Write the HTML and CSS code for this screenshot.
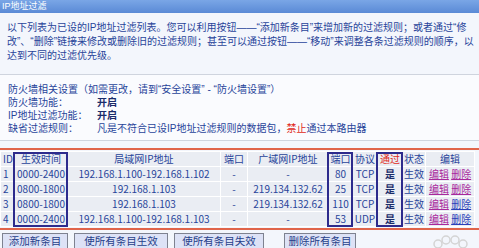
FILE: index.html
```html
<!DOCTYPE html>
<html lang="zh-CN">

<head>
    <meta charset="UTF-8">
    <title>IP地址过滤</title>
    <link rel="stylesheet" href="styles.css">
</head>

<body>
    <div class="titulo">IP地址过滤</div>

    <p class="intro">以下列表为已设的IP地址过滤列表。您可以利用按钮——“添加新条目”来增加新的过滤规则；或者通过“修<br>改”、“删除”链接来修改或删除旧的过滤规则；甚至可以通过按钮——“移动”来调整各条过滤规则的顺序，以达到不同的过滤优先级。</p>

    <div class="ajustes">
        <div>防火墙相关设置（如需更改，请到“安全设置” - “防火墙设置”）</div>
        <div class="fila"><span class="etiqueta">防火墙功能：</span><b>开启</b></div>
        <div class="fila"><span class="etiqueta">IP地址过滤功能：</span><b>开启</b></div>
        <div class="fila"><span class="etiqueta">缺省过滤规则：</span><span>凡是不符合已设IP地址过滤规则的数据包，<span class="rojo">禁止</span>通过本路由器</span></div>
    </div>

    <div class="zona-tabla">
        <table class="reglas">
            <colgroup>
                <col style="width:14px">
                <col style="width:53px">
                <col style="width:153px">
                <col style="width:27px">
                <col style="width:81px">
                <col style="width:24px">
                <col style="width:25px">
                <col style="width:25px">
                <col style="width:23px">
                <col style="width:49px">
            </colgroup>
            <tr>
                <th>ID</th>
                <th>生效时间</th>
                <th>局域网IP地址</th>
                <th>端口</th>
                <th>广域网IP地址</th>
                <th>端口</th>
                <th>协议</th>
                <th class="rojo">通过</th>
                <th>状态</th>
                <th>编辑</th>
            </tr>
            <tr>
                <td>1</td>
                <td>0000-2400</td>
                <td>192.168.1.100-192.168.1.102</td>
                <td>-</td>
                <td>-</td>
                <td>80</td>
                <td>TCP</td>
                <td class="si">是</td>
                <td>生效</td>
                <td><a class="visto">编辑</a> <a class="visto">删除</a></td>
            </tr>
            <tr>
                <td>2</td>
                <td>0800-1800</td>
                <td>192.168.1.103</td>
                <td>-</td>
                <td>219.134.132.62</td>
                <td>25</td>
                <td>TCP</td>
                <td class="si">是</td>
                <td>生效</td>
                <td><a class="visto">编辑</a> <a class="visto">删除</a></td>
            </tr>
            <tr>
                <td>3</td>
                <td>0800-1800</td>
                <td>192.168.1.103</td>
                <td>-</td>
                <td>219.134.132.62</td>
                <td>110</td>
                <td>TCP</td>
                <td class="si">是</td>
                <td>生效</td>
                <td><a class="visto">编辑</a> <a>删除</a></td>
            </tr>
            <tr>
                <td>4</td>
                <td>0000-2400</td>
                <td>192.168.1.100-192.168.1.103</td>
                <td>-</td>
                <td>-</td>
                <td>53</td>
                <td>UDP</td>
                <td class="si">是</td>
                <td>生效</td>
                <td><a class="visto">编辑</a> <a>删除</a></td>
            </tr>
        </table>
        <div class="marca marca-tiempo"></div>
        <div class="marca marca-puerto"></div>
        <div class="marca marca-paso"></div>
    </div>

    <div class="botones">
        <button class="b1">添加新条目</button>
        <button class="b2">使所有条目生效</button>
        <button class="b3">使所有条目失效</button>
        <button class="b4">删除所有条目</button>
        <svg class="huella" width="44" height="14" viewBox="0 0 44 14">
            <circle cx="10" cy="9" r="4" fill="none" stroke="#d4d4d4" stroke-width="1.5" />
            <circle cx="18" cy="5" r="4" fill="none" stroke="#d4d4d4" stroke-width="1.5" />
            <circle cx="27" cy="5" r="4" fill="none" stroke="#d4d4d4" stroke-width="1.5" />
            <circle cx="35" cy="9" r="4" fill="none" stroke="#d4d4d4" stroke-width="1.5" />
        </svg>
    </div>
</body>

</html>
```

FILE: styles.css
```css
body {
    margin: 0;
    padding: 0;
    width: 479px;
    height: 248px;
    overflow: hidden;
    background-color: #f3f6fc;
    color: #28449a;
    font-family: "Liberation Sans", "Noto Sans CJK SC", sans-serif;
    font-size: 10px;
}

.titulo {
    height: 13px;
    line-height: 13px;
    padding-left: 2px;
    font-size: 9px;
    color: #ffffff;
    background: linear-gradient(#7aa6e6, #5a8ad6);
}

.intro {
    margin: 0;
    padding: 8px 2px 0 7px;
    line-height: 14px;
}

.ajustes {
    margin-top: 11px;
    padding: 8px 8px 5px;
    background-color: #fafbfe;
    border-top: 1px solid #cfd4de;
    border-bottom: 1px solid #cfd4de;
    line-height: 13px;
}

.fila {
    display: flex;
}

.etiqueta {
    width: 89px;
}

.fila b {
    color: #1a2c6a;
}

.rojo {
    color: #e02a22;
}

.zona-tabla {
    position: relative;
    margin-top: 7px;
    padding: 1px 0;
    border-top: 2px solid #e0644a;
    border-bottom: 2px solid #e0644a;
}

.reglas {
    table-layout: fixed;
    width: 474px;
    border-collapse: collapse;
    font-family: "Noto Sans CJK SC", sans-serif;
}

.reglas th,
.reglas td {
    height: 14px;
    padding: 0;
    text-align: center;
    font-weight: normal;
    font-size: 10px;
    line-height: 14px;
    white-space: nowrap;
    overflow: hidden;
    background-color: #eaedf3;
    border: 1px solid #ffffff;
}

.reglas td:first-child,
.reglas th:first-child {
    text-align: left;
    padding-left: 2px;
}

.reglas td.si {
    font-weight: bold;
    color: #1a2c6a;
}

.reglas a {
    color: #2b3fb8;
    text-decoration: underline;
}

.reglas a.visto {
    color: #a8289c;
}

.marca {
    position: absolute;
    top: 2px;
    bottom: 1px;
    border: 2px solid #2d2b8c;
}

.marca-tiempo {
    left: 13px;
    width: 51px;
}

.marca-puerto {
    left: 327px;
    width: 22px;
}

.marca-paso {
    left: 376px;
    width: 23px;
}

.botones {
    display: flex;
    align-items: flex-start;
    padding: 3px 0 0 2px;
}

.botones button {
    height: 16px;
    padding: 0;
    margin-right: 6px;
    font-family: "Noto Sans CJK SC", sans-serif;
    font-size: 10.5px;
    line-height: 14px;
    color: #26408a;
    background-color: #dde2f6;
    border: 1px solid #7e8290;
}

.b1 {
    width: 66px;
}

.b2 {
    width: 94px;
}

.b3 {
    width: 90px;
}

.b4 {
    width: 72px;
    margin-left: 14px;
}

.huella {
    margin: 2px 0 0 66px;
}
```
